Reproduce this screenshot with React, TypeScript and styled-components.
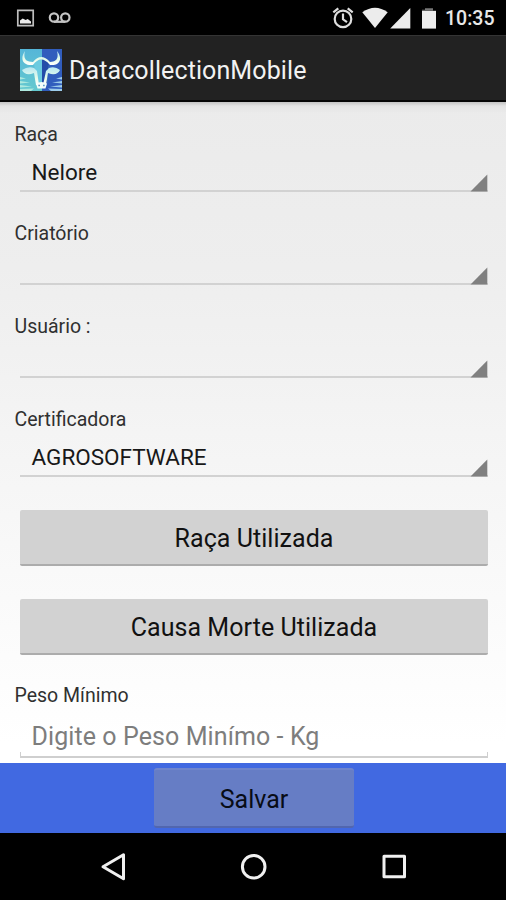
import React from "react";
import styled, { createGlobalStyle } from "styled-components";

const GlobalStyle = createGlobalStyle`
  * { box-sizing: border-box; }
  body { margin: 0; background: #000; }
  button, input { font-family: inherit; }
`;

const Screen = styled.div`
  width: 506px;
  height: 900px;
  display: flex;
  flex-direction: column;
  overflow: hidden;
  font-family: Roboto, "Liberation Sans", sans-serif;
  color: #141414;
`;

const StatusBar = styled.div`
  height: 35px;
  flex: none;
  display: flex;
  justify-content: space-between;
  background: #000;
`;

const Clock = styled.span`
  width: 61px;
  margin-left: 5px;
  font-size: 19.5px;
  font-weight: 500;
  line-height: 38px;
  white-space: nowrap;
  color: #e8e8e8;
`;

const StatusGroup = styled.div`
  display: flex;
`;

const ActionBar = styled.header`
  height: 67px;
  flex: none;
  display: flex;
  align-items: center;
  padding: 3px 0 0 20px;
  gap: 7px;
  background: #222;
  border-top: 1px solid #343434;
  border-bottom: 2px solid #050505;
`;

const Title = styled.h1`
  margin: 3px 0 0;
  font-size: 25px;
  font-weight: 400;
  line-height: 32px;
  letter-spacing: 0.1px;
  white-space: nowrap;
  color: #f2f2f2;
`;

const Form = styled.main`
  height: 661px;
  flex: none;
  overflow: hidden;
  padding: 20px 0 0;
  background:
    linear-gradient(#c2c2c2, rgba(222, 222, 222, 0.6) 4px, rgba(235, 235, 235, 0) 11px),
    linear-gradient(#ebebeb 0%, #eeeeee 25%, #f4f4f4 50%, #fafafa 75%, #ffffff 97%);
`;

const Field = styled.section<{ $gap: number }>`
  margin-bottom: ${(p) => p.$gap}px;
`;

const Label = styled.div<{ $lineHeight?: number }>`
  height: 24px;
  padding-left: 14.5px;
  font-size: 19.5px;
  line-height: ${(p) => p.$lineHeight ?? 26}px;
  color: #303030;
`;

const Spinner = styled.div<{ $height: number }>`
  height: ${(p) => p.$height}px;
  margin: 0 18px 0 20px;
  padding-left: 11.5px;
  display: flex;
  align-items: flex-end;
  justify-content: space-between;
  border-bottom: 2px solid #d2d2d2;
`;

const Value = styled.span`
  font-size: 22.5px;
  line-height: 26px;
  margin-bottom: 5px;
  color: #181818;
`;

const Corner = styled.svg`
  width: 18px;
  height: 18px;
  flex: none;
  margin-bottom: -2px;
  margin-left: auto;
  fill: #808080;
`;

const FormButton = styled.button`
  display: block;
  width: 468px;
  height: 56px;
  margin: 0 0 33px 20px;
  padding: 4px 0 0;
  border: 0;
  border-bottom: 2px solid #acacac;
  border-radius: 2px;
  background: #d2d2d2;
  font-size: 25px;
  line-height: 50px;
  letter-spacing: 0.05px;
  color: #111;
  &:last-of-type { margin-bottom: 29px; }
`;

const InputFrame = styled.div`
  position: relative;
  height: 50px;
  margin: 0 18px 0 20px;
  border-bottom: 2px solid #cfcfcf;
  &::before, &::after {
    content: "";
    position: absolute;
    bottom: 0;
    width: 1px;
    height: 4px;
    background: #cfcfcf;
  }
  &::before { left: 0; }
  &::after { right: 0; }
`;

const Input = styled.input`
  display: block;
  width: 100%;
  height: 48px;
  padding: 9px 12px 0 11.5px;
  border: 0;
  outline: 0;
  background: transparent;
  font-size: 25px;
  letter-spacing: 0.09px;
  &::placeholder { color: #7d7d7d; opacity: 1; }
`;

const Footer = styled.footer`
  height: 70px;
  flex: none;
  display: flex;
  justify-content: center;
  padding-top: 5px;
  padding-left: 2px;
  background: #4169e1;
`;

const SaveButton = styled.button`
  width: 200px;
  height: 60px;
  padding: 2px 0 0;
  border: 0;
  border-top: 2px solid #7085cc;
  border-bottom: 2px solid #5166af;
  border-radius: 3px;
  background: #667dc5;
  font-size: 25px;
  color: #080c16;
`;

const NavBar = styled.nav`
  height: 67px;
  flex: none;
  display: flex;
  background: #000;
`;

const NavIcons = styled.svg`
  width: 506px;
  height: 67px;
  fill: none;
  stroke: #f0f0f0;
  stroke-width: 3;
  stroke-linejoin: round;
`;

const NotificationIcons = () => (
  <svg width="80" height="35" viewBox="0 0 80 35">
    <path d="M17.8 10.3h15.4v15.4H17.8z" fill="none" stroke="#bdbdbd" strokeWidth="1.7" />
    <path d="M20 23.5v-3l2.7-2 3 1.5 2-1 3.3 2.5v2z" fill="#ececec" />
    <g fill="none" stroke="#c4c4c4" strokeWidth="2.2">
      <circle cx="54" cy="17.5" r="4.2" />
      <circle cx="65.3" cy="17.5" r="4.2" />
      <path d="M54 21.8h11.3" />
    </g>
  </svg>
);

const SystemIcons = () => (
  <svg width="110" height="35" viewBox="330 0 110 35">
    <g fill="none" stroke="#dedede" strokeWidth="2.2" strokeLinecap="butt">
      <circle cx="343" cy="18.9" r="8.3" />
      <path d="M343 13.5v5.8l4 2.8M333.3 12.3l5-4M352.7 12.3l-5-4" />
    </g>
    <g fill="#ececec">
      <path d="M362.3 12.2Q375 3.2 387.7 12.2L375 28z" />
      <path d="M410.3 8v20.4H390.2z" />
      <path d="M422 10.8h14v17.8h-14z" />
    </g>
    <path d="M425 8.2h8v2.6h-11v-1h3z" fill="#777" />
  </svg>
);

const AppIcon = () => (
  <svg width="42" height="42" viewBox="0 0 42 42">
    <defs>
      <linearGradient id="left" x2="0" y2="1">
        <stop stopColor="#55b6d8" /><stop offset="1" stopColor="#65c9cf" />
      </linearGradient>
      <linearGradient id="bone" x2="0" y2="1">
        <stop stopColor="#b9e8f2" /><stop offset="0.6" stopColor="#e5fbea" /><stop offset="1" stopColor="#fff" />
      </linearGradient>
    </defs>
    <path d="M0 0h22v42H0z" fill="url(#left)" />
    <path d="M22 0h20v42H22z" fill="#315dbd" />
    <path d="M14 14q8-7 15 0l-2 21H16z" fill="#6bcbe0" />
    <path d="M22 10q5 0 7 5l-2 20h-5z" fill="#244ca8" />
    <path d="M5 2C-1 11 4 17 13 16q8-11 17 0c8 1 14-5 7-14 2 8-1 11-7 11q-9-10-17 0C6 13 3 10 5 2z" fill="url(#bone)" />
    <path d="M14 19Q8 17 2 21q2 5 9 4l3-1 2 12h3l-2-14zM29 19q6-2 11 2-2 5-9 4l-3-1-2 12h-3l3-14z" fill="url(#bone)" />
    <path d="M16 34.5q5.500-3 11 0l-1.500 5h-8z" fill="#f4fffb" />
    <path d="M18.300 36.500h1.700M23 36.500h1.700" stroke="#5f9bc6" strokeWidth="1.300" />
    <path d="M0 28l6 1.500-6 1zM0 32l10 1.500-10 1zM0 36l12 1.500-12 1zM0 40l14-.5-3 2.500H0z" fill="#aee9df" />
    <path d="M42 28l-6 1.500 6 1zM42 32l-10 1.500 10 1zM42 36l-12 1.500 12 1zM42 40l-14-.5 3 2.500h11z" fill="#9ccbea" />
  </svg>
);

const SpinnerCorner = () => (
  <Corner viewBox="0 0 18 18"><path d="M17.3 .5v17H.5z" /></Corner>
);

export default function App() {
  return (
    <>
      <GlobalStyle />
      <Screen>
        <StatusBar>
          <NotificationIcons />
          <StatusGroup>
            <SystemIcons />
            <Clock>10:35</Clock>
          </StatusGroup>
        </StatusBar>
        <ActionBar>
          <AppIcon />
          <Title>DatacollectionMobile</Title>
        </ActionBar>
        <Form>
          <Field $gap={30}>
            <Label>Raça</Label>
            <Spinner $height={46}><Value>Nelore</Value><SpinnerCorner /></Spinner>
          </Field>
          <Field $gap={29}>
            <Label $lineHeight={24}>Criatório</Label>
            <Spinner $height={39}><SpinnerCorner /></Spinner>
          </Field>
          <Field $gap={29}>
            <Label>Usuário :</Label>
            <Spinner $height={40}><SpinnerCorner /></Spinner>
          </Field>
          <Field $gap={33}>
            <Label>Certificadora</Label>
            <Spinner $height={46}><Value>AGROSOFTWARE</Value><SpinnerCorner /></Spinner>
          </Field>
          <FormButton>Raça Utilizada</FormButton>
          <FormButton>Causa Morte Utilizada</FormButton>
          <Field $gap={0}>
            <Label $lineHeight={24}>Peso Mínimo</Label>
            <InputFrame><Input placeholder="Digite o Peso Minímo - Kg" /></InputFrame>
          </Field>
        </Form>
        <Footer><SaveButton>Salvar</SaveButton></Footer>
        <NavBar>
          <NavIcons viewBox="0 833 506 67">
            <path d="M103 866.7l20.5-12v24z" />
            <circle cx="253.7" cy="866.7" r="11.3" />
            <path d="M384 856.3h20.5v20.5H384z" />
          </NavIcons>
        </NavBar>
      </Screen>
    </>
  );
}
